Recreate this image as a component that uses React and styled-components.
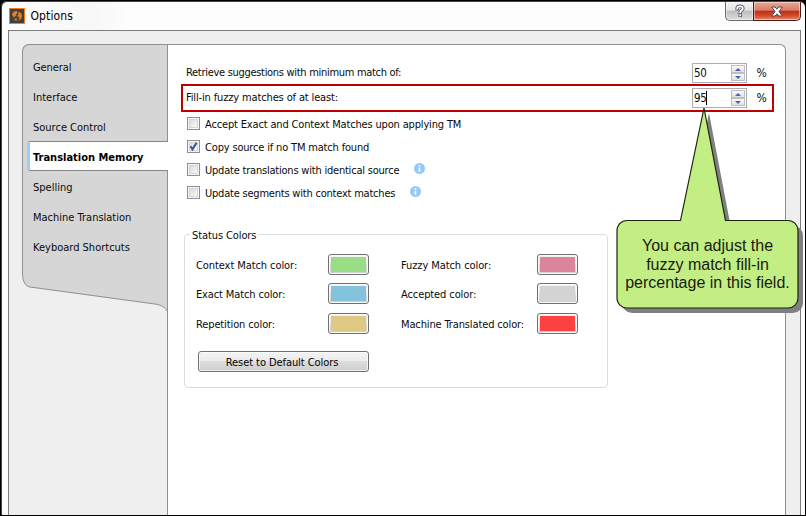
import React from 'react';
import styled, { createGlobalStyle, css } from 'styled-components';

const Global = createGlobalStyle`
  * { box-sizing: border-box; }
  body { margin: 0; background: #000; overflow: hidden; }
`;

const Frame = styled.div`
  width: 806px;
  height: 516px;
  padding: 2px 1px 1px 2px;
  background: #000;
  overflow: hidden;
  font: 11px/13px "DejaVu Sans Condensed", "DejaVu Sans", sans-serif;
  color: #0a0a0a;
`;

const Window = styled.div`
  height: 513px;
  display: flex;
  flex-direction: column;
  border-radius: 5px 5px 0 0;
  background: linear-gradient(90deg, #fdfdfd 0, #f7f7f7 90px, #fdfdfd 125px);
  box-shadow: -1px -1px 0 #444;
  overflow: hidden;
`;

const TitleBar = styled.header`
  flex: none;
  height: 28px;
  padding: 0 4px 0 7px;
  display: flex;
  align-items: flex-start;
`;

const AppIcon = styled.svg`
  width: 16px;
  height: 16px;
  margin-top: 6px;
`;

const Title = styled.h1`
  margin: 6px auto 0 5.5px;
  font-size: 12px;
  line-height: 16px;
  letter-spacing: 0.1px;
  font-weight: normal;
  color: #000;
`;

const WindowButton = styled.button`
  width: ${(p) => (p.$close ? 48 : 28)}px;
  height: 19px;
  padding: 0;
  display: flex;
  align-items: center;
  justify-content: center;
  border: 1px solid #6b6b6b;
  border-top: 0;
  box-shadow: inset 0 0 0 1px rgba(255, 255, 255, 0.45);
  ${(p) =>
    p.$close
      ? css`
          border-color: #4f1d16;
          border-radius: 0 0 5px 0;
          background: linear-gradient(#e9a696 0, #d97c68 46%, #bd2f14 50%, #cf4a2c 75%, #e88a62 100%);
        `
      : css`
          border-right: 0;
          border-radius: 0 0 0 5px;
          background: linear-gradient(#f4f4f4 0, #e2e2e2 46%, #bcbcbc 50%, #dedede 100%);
        `}
`;

const Client = styled.div`
  flex: 1;
  margin: 0 4px 0 6px;
  padding: 13px 14px 0 13px;
  display: flex;
  border: 1px solid #7d7d7d;
  border-bottom: 0;
  background: #efefef;
`;

const Sidebar = styled.nav`
  width: 145px;
  display: flex;
  flex-direction: column;
`;

const NavList = styled.ul`
  margin: 0;
  padding: 6px 0 0;
  height: 217px;
  list-style: none;
  border: 1px solid #8f8f8f;
  border-width: 1px 0 0 1px;
  border-radius: 7px 0 0 0;
  background: #d6d6d6;
`;

const NavItem = styled.li`
  height: 30px;
  padding-left: 10px;
  line-height: 33px;
  letter-spacing: ${(p) => p.$track || 0}px;
  ${(p) =>
    p.$active &&
    css`
      position: relative;
      margin: 0 -1px 0 4px;
      padding-left: 3px;
      border: 1px solid #858585;
      border-width: 1px 0;
      border-left: 3px solid #99ccff;
      border-radius: 3px 0 0 3px;
      background: #fff;
      line-height: 31px;
      font-weight: bold;
      color: #000;
    `}
`;

const Tail = styled.svg`
  display: block;
  width: 145px;
  height: 54px;
`;

const Panel = styled.main`
  flex: 1;
  padding: 18px 0 0 13px;
  border: 1px solid #8f8f8f;
  border-bottom: 0;
  border-radius: 0 6px 0 0;
  background: #fff;
`;

const MatchRow = styled.div`
  width: 593px;
  height: ${(p) => (p.$marked ? 28 : 20)}px;
  margin-bottom: ${(p) => (p.$marked ? 5 : 1)}px;
  padding: 0 0 0 3px;
  display: flex;
  align-items: center;
  border: 0 solid #c00000;
  border-width: ${(p) => (p.$marked ? '2px' : '0 2px')};
  ${(p) => !p.$marked && 'border-color: transparent;'}
`;

const Label = styled.span`
  white-space: nowrap;
  letter-spacing: ${(p) => p.$track || 0}px;
`;

const FieldLabel = styled(Label)`
  padding-bottom: 2px;
`;

const CheckLabel = styled(Label)`
  padding-top: 2px;
`;

const Spinner = styled.div`
  width: 55px;
  height: 20px;
  margin-left: auto;
  padding: 0 1px;
  display: flex;
  align-items: center;
  border: 1px solid #abadb3;
  background: #fff;
`;

const SpinValue = styled.span`
  font-size: 11.5px;
  line-height: 14px;
  letter-spacing: -0.4px;
  border-right: 1px solid ${(p) => (p.$caret ? '#000' : 'transparent')};
`;

const SpinButtons = styled.div`
  width: 14px;
  margin-left: auto;
  display: grid;
`;

const SpinButton = styled.button`
  height: 8px;
  padding: 0;
  display: flex;
  align-items: center;
  justify-content: center;
  border: 1px solid #bdbdc2;
  background: linear-gradient(#fafafa, #e0e0e0);
`;

const Unit = styled.span`
  width: 15px;
  margin-left: 10px;
  font-size: 12px;
  text-indent: -0.5px;
`;

const Checks = styled.div`
  padding-left: 6px;
  display: grid;
  grid-auto-rows: 13px;
  gap: 10px;
`;

const CheckRow = styled.label`
  display: flex;
  align-items: center;
`;

const Box = styled.span`
  width: 13px;
  height: 13px;
  margin-right: 5px;
  display: flex;
  border: 1px solid #8e8f8f;
  background: linear-gradient(135deg, #cdd0d4, #f6f6f6 75%);
  box-shadow: inset 0 0 0 1px #f6f6f6, inset 0 0 0 2px #d3d6da;
`;

const InfoIcon = styled.svg`
  width: 11px;
  height: 11px;
  margin: -3px 0 0 ${(p) => p.$gap}px;
`;

const Group = styled.fieldset`
  width: 424px;
  height: 160px;
  margin: 29px 0 0 3px;
  padding: 13px 0 0 11px;
  border: 1px solid #d5dfe5;
  border-radius: 4px;
`;

const Legend = styled.legend`
  margin-left: -6px;
  padding: 1px 2px 0;
  height: 13px;
  letter-spacing: -0.1px;
`;

const Colors = styled.div`
  display: grid;
  grid-template-columns: 132px 73px 136px 41px;
  grid-template-rows: 29px 30px 21px;
  align-items: start;
`;

const ColorLabel = styled(Label)`
  line-height: 24px;
`;

const Swatch = styled.button`
  width: 41px;
  height: 21px;
  padding: 2px;
  border: 1px solid #707070;
  border-radius: 3px;
  background: linear-gradient(#f5f5f5 0, #ebebeb 49%, #dddddd 50%, #cfcfcf 100%);
  box-shadow: inset 0 0 0 1px #fafafa;

  &::before {
    content: '';
    display: block;
    width: 35px;
    height: 15px;
    background: ${(p) => p.$color};
  }
`;

const ResetButton = styled.button`
  width: 171px;
  height: 21px;
  margin: 14px 0 0 2px;
  padding: 1px 3px 0 0;
  display: block;
  border: 1px solid #707070;
  border-radius: 3px;
  background: linear-gradient(#f3f3f3 0, #ebebeb 49%, #dddddd 50%, #cdcdcd 100%);
  box-shadow: inset 0 0 0 1px rgba(255, 255, 255, 0.7);
  font: inherit;
  line-height: 17px;
  letter-spacing: -0.07px;
  color: #000;
`;

const ColorArea = styled.div`
  height: 83px;
`;

const Callout = styled.aside`
  position: absolute;
  left: 610px;
  top: 100px;
  width: 196px;
  height: 216px;
`;

const Bubble = styled.svg`
  display: block;
  width: 196px;
  height: 216px;
`;

const CalloutText = styled.p`
  position: absolute;
  left: 6.5px;
  top: 137px;
  width: 182px;
  margin: 0;
  font: 16px/18.5px "Liberation Sans", Arial, sans-serif;
  text-align: center;
  color: #1a1a10;
`;

const CalloutLine = styled.span`
  display: block;
  white-space: nowrap;
`;

const NAV = [
  { text: 'General', track: -0.1 },
  { text: 'Interface' },
  { text: 'Source Control' },
  { text: 'Translation Memory', active: true },
  { text: 'Spelling' },
  { text: 'Machine Translation' },
  { text: 'Keyboard Shortcuts' },
];

const CHECKS = [
  { text: 'Accept Exact and Context Matches upon applying TM', track: -0.16 },
  { text: 'Copy source if no TM match found', track: -0.17, checked: true },
  { text: 'Update translations with identical source', track: -0.21, info: 15 },
  { text: 'Update segments with context matches', track: -0.21, info: 15 },
];

const COLORS = [
  { text: 'Context Match color:', color: '#99dd84', track: -0.08 },
  { text: 'Fuzzy Match color:', color: '#dc849a', track: -0.08 },
  { text: 'Exact Match color:', color: '#84c3dc', track: -0.13 },
  { text: 'Accepted color:', color: '#d3d3d3', track: -0.1 },
  { text: 'Repetition color:', color: '#dec882', track: -0.12 },
  { text: 'Machine Translated color:', color: '#fb4141', track: -0.13 },
];

const SHAPE =
  'M70.5 120.5 L94 8 L115.5 120.5 H178 A10 10 0 0 1 188 130.5 V198 A10 10 0 0 1 178 208 H17 A10 10 0 0 1 7 198 V130.5 A10 10 0 0 1 17 120.5 Z';

function NumberField({ value, caret }) {
  return (
    <Spinner>
      <SpinValue $caret={caret}>{value}</SpinValue>
      <SpinButtons>
        <SpinButton aria-label="Increase">
          <svg width="6" height="3" viewBox="0 0 6 3"><path d="M0 3 L3 0 L6 3Z" fill="#4a63b5" /></svg>
        </SpinButton>
        <SpinButton aria-label="Decrease">
          <svg width="6" height="3" viewBox="0 0 6 3"><path d="M0 0 L3 3 L6 0Z" fill="#4a63b5" /></svg>
        </SpinButton>
      </SpinButtons>
    </Spinner>
  );
}

export default function App() {
  return (
    <Frame>
      <Global />
      <Window>
        <TitleBar>
          <AppIcon viewBox="0 0 16 16">
            <rect x="0.5" y="0.5" width="15" height="15" fill="#41403f" stroke="#f0801f" />
            <circle cx="8" cy="8" r="5.3" fill="#5a4632" />
            <path d="M3 6 L5 3.6 L8 3 L8.5 5 L7 6 L7.5 7.5 L5.5 8 L6 9.5 L4 8.5Z M9.5 4 L12 5 L13 8 L12 11 L10 12.5 L10.5 9.5 L8.5 8 L9.5 6.5Z M5.5 11 L7.5 10.5 L8 12.5 L6.5 12.8Z" fill="#e87f24" />
          </AppIcon>
          <Title>Options</Title>
          <WindowButton aria-label="Help">
            <svg width="12" height="14" viewBox="0 0 12 14" fill="none" strokeLinecap="square">
              <path d="M3.2 4.6 C3.2 1.6 8.8 1.6 8.8 4.4 C8.8 6.3 6.2 6.3 6.2 8.3 M6.2 11.2 V11.3" stroke="#5c6070" strokeWidth="3.6" />
              <path d="M3.2 4.6 C3.2 1.6 8.8 1.6 8.8 4.4 C8.8 6.3 6.2 6.3 6.2 8.3 M6.2 11.2 V11.3" stroke="#fff" strokeWidth="1.8" />
            </svg>
          </WindowButton>
          <WindowButton $close aria-label="Close">
            <svg width="12" height="11" viewBox="0 0 12 11">
              <path d="M0.7 1 H4.1 L6 3.2 L7.9 1 H11.3 L8 5.5 L11.3 10 H7.9 L6 7.8 L4.1 10 H0.7 L4 5.5Z" fill="#fff" stroke="#4b4a5a" />
            </svg>
          </WindowButton>
        </TitleBar>
        <Client>
          <Sidebar>
            <NavList>
              {NAV.map((n) => (
                <NavItem key={n.text} $active={n.active} $track={n.track}>{n.text}</NavItem>
              ))}
            </NavList>
            <Tail viewBox="0 0 145 54">
              <path d="M0.5 0 V13 C1 21 3 25 8 26 L133 43 C139 44 143 46 145 50 V0 Z" fill="#d6d6d6" />
              <path d="M0.5 0 V13 C1 21 3 25 8 26 L133 43 C139 44 143 46 145 50" fill="none" stroke="#8f8f8f" />
            </Tail>
          </Sidebar>
          <Panel>
            <MatchRow>
              <FieldLabel $track={-0.3}>Retrieve suggestions with minimum match of:</FieldLabel>
              <NumberField value="50" />
              <Unit>%</Unit>
            </MatchRow>
            <MatchRow $marked>
              <FieldLabel $track={-0.14}>Fill-in fuzzy matches of at least:</FieldLabel>
              <NumberField value="95" caret />
              <Unit>%</Unit>
            </MatchRow>
            <Checks>
              {CHECKS.map((c) => (
                <CheckRow key={c.text}>
                  <Box>
                    {c.checked && (
                      <svg width="11" height="11" viewBox="0 0 11 11">
                        <path d="M2.5 5.3 L4.5 8.3 L8.6 1.8" fill="none" stroke="#3c4f96" strokeWidth="2" />
                      </svg>
                    )}
                  </Box>
                  <CheckLabel $track={c.track}>{c.text}</CheckLabel>
                  {c.info && (
                    <InfoIcon $gap={c.info} viewBox="0 0 11 11">
                      <circle cx="5.5" cy="5.5" r="5.5" fill="#93c9fb" />
                      <path d="M5.5 4.5 V8.8 M5.5 2 V3.5" fill="none" stroke="#fff" strokeWidth="1.6" />
                    </InfoIcon>
                  )}
                </CheckRow>
              ))}
            </Checks>
            <Group>
              <Legend>Status Colors</Legend>
              <ColorArea>
                <Colors>
                  {COLORS.map((c) => (
                    <React.Fragment key={c.text}>
                      <ColorLabel $track={c.track}>{c.text}</ColorLabel>
                      <Swatch $color={c.color} aria-label={c.text} />
                    </React.Fragment>
                  ))}
                </Colors>
              </ColorArea>
              <ResetButton>Reset to Default Colors</ResetButton>
            </Group>
          </Panel>
        </Client>
      </Window>
      <Callout>
        <Bubble viewBox="0 0 196 216">
          <path d={SHAPE} transform="translate(5 5)" fill="#808080" />
          <path d={SHAPE} fill="#c2ee84" stroke="#1c2410" strokeWidth="1.2" />
        </Bubble>
        <CalloutText>
          <CalloutLine>You can adjust the</CalloutLine>
          <CalloutLine>fuzzy match fill-in</CalloutLine>
          <CalloutLine>percentage in this field.</CalloutLine>
        </CalloutText>
      </Callout>
    </Frame>
  );
}
